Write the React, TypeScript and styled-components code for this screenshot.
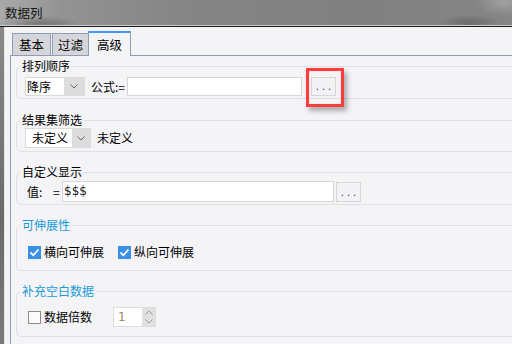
import React from "react";
import styled, { createGlobalStyle } from "styled-components";

const GlobalStyle = createGlobalStyle`
  html, body {
    margin: 0;
    padding: 0;
  }
  body {
    width: 512px;
    height: 344px;
    overflow: hidden;
    background: #f4f4f7;
    color: #000;
    font-family: "Noto Sans CJK SC", "Noto Sans", sans-serif;
    font-size: 12px;
  }
`;

const Window = styled.div`
  width: 512px;
  height: 344px;
  display: flex;
  flex-direction: column;
  overflow: hidden;
`;

const TitleBar = styled.div`
  flex: none;
  height: 26px;
  box-sizing: border-box;
  padding-left: 5px;
  display: flex;
  align-items: center;
  border-bottom: 1px solid #cdcdcd;
  background:
    radial-gradient(ellipse 40px 8px at 40px 24px, rgba(70, 70, 70, 0.45), transparent),
    radial-gradient(ellipse 30px 7px at 470px 22px, rgba(70, 70, 70, 0.4), transparent),
    radial-gradient(ellipse 30px 14px at 505px 2px, rgba(190, 190, 190, 0.5), transparent),
    linear-gradient(90deg, #a9a9a9 0%, #939393 12%, #858585 35%, #808080 70%, #858585 100%);
`;

const Title = styled.span`
  font-size: 12.5px;
  color: #141414;
  line-height: 16px;
`;

const Body = styled.div`
  flex: 1;
  display: flex;
  min-height: 0;
  border-top: 1px solid #1c1c1c;
`;

const LeftEdge = styled.div`
  flex: none;
  width: 4px;
  background: linear-gradient(180deg, #8a8a8a, #6a6a6a 60%, #7a7a7a);
  border-right: 1px solid #e6e6e6;
`;

const Main = styled.div`
  flex: 1;
  min-width: 0;
  overflow: hidden;
  padding: 4px 0 0 5px;
  background: #f4f4f7;
`;

const TabBar = styled.div`
  display: flex;
  align-items: flex-end;
  height: 24px;
  padding-left: 2px;
`;

const Tab = styled.div<{ $active?: boolean; $w: number; $ml?: number }>`
  position: relative;
  z-index: ${(p) => (p.$active ? 1 : 0)};
  box-sizing: border-box;
  width: ${(p) => p.$w}px;
  height: ${(p) => (p.$active ? 25 : 22)}px;
  margin-left: ${(p) => p.$ml ?? 0}px;
  margin-bottom: ${(p) => (p.$active ? -1 : 0)}px;
  display: flex;
  align-items: center;
  justify-content: center;
  border: 1px solid #8e9db5;
  border-top: ${(p) => (p.$active ? "2px solid #3d9cf2" : "1px solid #8e9db5")};
  border-bottom: none;
  background: ${(p) => (p.$active ? "#f4f4f7" : "#d6d6da")};
  font-size: 12.5px;
  line-height: 16px;
  padding-top: ${(p) => (p.$active ? 1 : 0)}px;
`;

const Pane = styled.div`
  width: 600px;
  height: 100%;
  box-sizing: border-box;
  border-top: 1px solid #8e9db5;
  border-left: 1px solid #8e9db5;
  padding: 2px 0 0 5px;
  display: flex;
  flex-direction: column;
  gap: 12px;
`;

const Group = styled.fieldset<{ $mt?: number }>`
  margin: ${(p) => p.$mt ?? 0}px 0 0 0;
  padding: 0;
  min-width: 0;
  width: 580px;
  box-sizing: border-box;
  border: 1px solid #e0e0e4;
  border-radius: 5px;
`;

const Legend = styled.legend<{ $blue?: boolean }>`
  margin-left: 3px;
  padding: 0 2px;
  font-size: 12px;
  line-height: 16px;
  color: ${(p) => (p.$blue ? "#1a9ad6" : "#000")};
`;

const GroupBody = styled.div<{ $pt: number; $pb: number }>`
  display: flex;
  align-items: center;
  padding: ${(p) => p.$pt}px 0 ${(p) => p.$pb}px 8px;
`;

const Combo = styled.div<{ $w: number; $h: number; $pl: number; $arrow: number }>`
  display: flex;
  box-sizing: border-box;
  width: ${(p) => p.$w}px;
  height: ${(p) => p.$h}px;
  border: 1px solid #dadada;
  background: #fff;
  > span:first-child {
    flex: 1;
    padding-left: ${(p) => p.$pl}px;
    line-height: ${(p) => p.$h - 2}px;
    font-size: 12px;
  }
  > span:last-child {
    width: ${(p) => p.$arrow}px;
  }
`;

const ComboArrow = styled.span`
  display: flex;
  align-items: center;
  justify-content: center;
  background: #dcdcdf;
`;

const Label = styled.span<{ $ml?: number; $w?: number }>`
  margin-left: ${(p) => p.$ml ?? 0}px;
  width: ${(p) => (p.$w ? `${p.$w}px` : "auto")};
  flex: none;
  font-size: 12px;
  line-height: 16px;
  white-space: nowrap;
`;

const TextInput = styled.div<{ $w: number; $h: number }>`
  box-sizing: border-box;
  width: ${(p) => p.$w}px;
  height: ${(p) => p.$h}px;
  border: 1px solid #d6d6d6;
  background: #fff;
  padding-left: 1px;
  font-family: "DejaVu Sans", "Noto Sans", sans-serif;
  font-size: 12px;
  line-height: ${(p) => p.$h - 2}px;
  color: #1a1a1a;
`;

const DotsButton = styled.div<{ $ml: number; $h: number }>`
  position: relative;
  flex: none;
  box-sizing: border-box;
  width: 25px;
  height: ${(p) => p.$h}px;
  margin-left: ${(p) => p.$ml}px;
  border: 1px solid #d6d6d6;
  background: #f3f3f5;
  display: flex;
  justify-content: center;
  align-items: flex-end;
  padding-bottom: 3px;
  font-family: "DejaVu Sans", sans-serif;
  font-size: 10px;
  line-height: 10px;
  letter-spacing: 3px;
  text-indent: 3px;
  color: #3a2a6a;
`;

const Highlight = styled.div`
  position: absolute;
  left: -6px;
  top: -10px;
  width: 38px;
  height: 39px;
  box-sizing: border-box;
  border: 3px solid #ff3d3d;
  box-shadow: 3px 4px 5px rgba(0, 0, 0, 0.3), inset 0 0 1px #ff9a9a;
  pointer-events: none;
`;

const Check = styled.span<{ $checked?: boolean; $ml: number }>`
  flex: none;
  box-sizing: border-box;
  width: 13px;
  height: 13px;
  margin-left: ${(p) => p.$ml}px;
  display: flex;
  align-items: center;
  justify-content: center;
  background: ${(p) => (p.$checked ? "#3a8fe6" : "#fbfbfb")};
  border: ${(p) => (p.$checked ? "none" : "1px solid #8c8c8c")};
`;

const Spin = styled.div`
  display: flex;
  box-sizing: border-box;
  width: 43px;
  height: 20px;
  margin-left: 21px;
  border: 1px solid #dcdcdc;
  background: #fff;
`;

const SpinValue = styled.span`
  flex: 1;
  padding-left: 4px;
  font-family: "DejaVu Sans", sans-serif;
  font-size: 12px;
  line-height: 18px;
  color: #a08a70;
`;

const SpinArrows = styled.span`
  width: 13px;
  display: flex;
  flex-direction: column;
  align-items: center;
  justify-content: space-around;
  background: #e0e0e3;
`;

const Chevron = ({ up = false, color = "#6a6a6a" }: { up?: boolean; color?: string }) => (
  <svg width="8" height="5" viewBox="0 0 8 5">
    <polyline
      points={up ? "0.5,4.5 4,1 7.5,4.5" : "0.5,0.5 4,4 7.5,0.5"}
      fill="none"
      stroke={color}
      strokeWidth="1"
    />
  </svg>
);

const Tick = () => (
  <svg width="11" height="11" viewBox="0 0 11 11">
    <polyline points="1.5,5.5 4.3,8.3 9.5,2.5" fill="none" stroke="#fff" strokeWidth="1.8" />
  </svg>
);

export default function App() {
  return (
    <>
      <GlobalStyle />
      <Window>
        <TitleBar>
          <Title>数据列</Title>
        </TitleBar>
        <Body>
          <LeftEdge />
          <Main>
            <TabBar>
              <Tab $w={39}>基本</Tab>
              <Tab $w={37} $ml={1}>过滤</Tab>
              <Tab $w={43} $ml={-1} $active>高级</Tab>
            </TabBar>
            <Pane>
              <Group>
                <Legend>排列顺序</Legend>
                <GroupBody $pt={3} $pb={2}>
                  <Combo $w={60} $h={19} $pl={1} $arrow={20}>
                    <span>降序</span>
                    <ComboArrow>
                      <Chevron />
                    </ComboArrow>
                  </Combo>
                  <Label $ml={6} $w={36}>公式:=</Label>
                  <TextInput $w={175} $h={19} />
                  <DotsButton $ml={9} $h={19}>
                    ...
                    <Highlight />
                  </DotsButton>
                </GroupBody>
              </Group>

              <Group $mt={1}>
                <Legend>结果集筛选</Legend>
                <GroupBody $pt={0} $pb={3}>
                  <Combo $w={66} $h={20} $pl={6} $arrow={18}>
                    <span>未定义</span>
                    <ComboArrow>
                      <Chevron />
                    </ComboArrow>
                  </Combo>
                  <Label $ml={6}>未定义</Label>
                </GroupBody>
              </Group>

              <Group>
                <Legend>自定义显示</Legend>
                <GroupBody $pt={1} $pb={2}>
                  <Label $ml={2} $w={26}>值:</Label>
                  <Label $w={9}>=</Label>
                  <TextInput $w={272} $h={21}>$$$</TextInput>
                  <DotsButton $ml={2} $h={20}>...</DotsButton>
                </GroupBody>
              </Group>

              <Group>
                <Legend $blue>可伸展性</Legend>
                <GroupBody $pt={11} $pb={10}>
                  <Check $checked $ml={3}>
                    <Tick />
                  </Check>
                  <Label $ml={3}>横向可伸展</Label>
                  <Check $checked $ml={14}>
                    <Tick />
                  </Check>
                  <Label $ml={3}>纵向可伸展</Label>
                </GroupBody>
              </Group>

              <Group>
                <Legend $blue>补充空白数据</Legend>
                <GroupBody $pt={8} $pb={9}>
                  <Check $ml={3} />
                  <Label $ml={3}>数据倍数</Label>
                  <Spin>
                    <SpinValue>1</SpinValue>
                    <SpinArrows>
                      <Chevron up color="#9a9a9a" />
                      <Chevron color="#9a9a9a" />
                    </SpinArrows>
                  </Spin>
                </GroupBody>
              </Group>
            </Pane>
          </Main>
        </Body>
      </Window>
    </>
  );
}
